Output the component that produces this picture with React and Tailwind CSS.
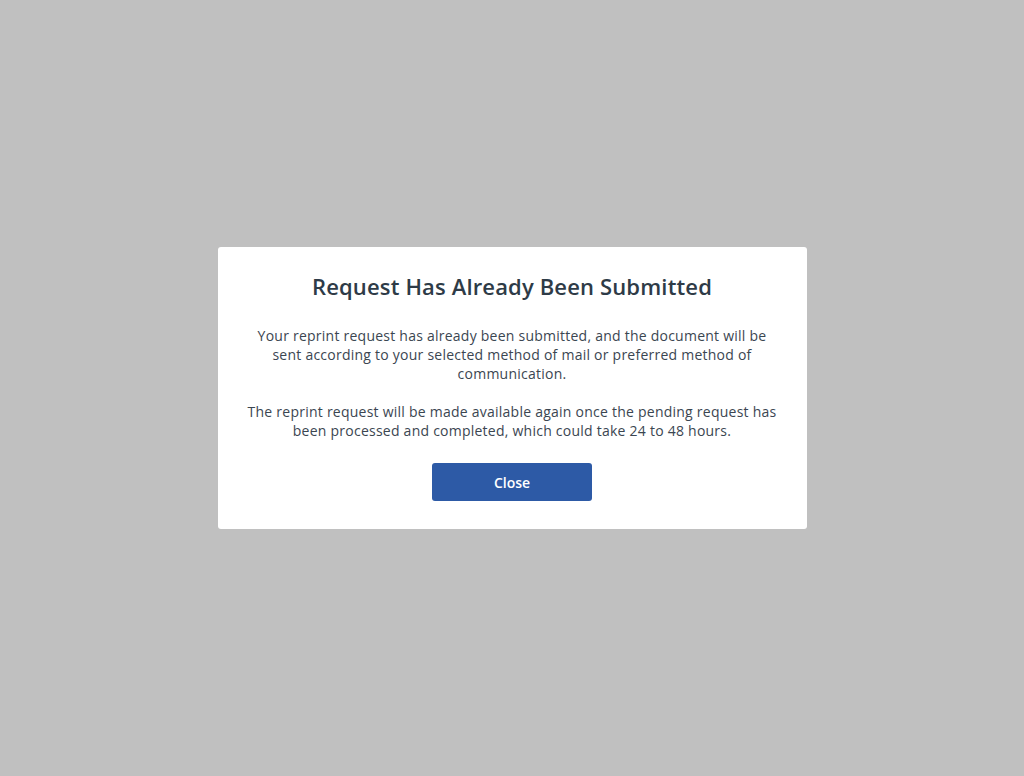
export default function App() {
  return (
    <div
      className="w-[1024px] h-[776px] bg-[#c0c0c0] flex items-start justify-center"
      style={{ fontFamily: '"Open Sans", "Noto Sans", sans-serif' }}
    >
      <div className="mt-[247px] w-[589px] bg-white rounded-[3px] pt-[24px] pb-[28px] px-[28px] flex flex-col items-center text-center">
        <h1 className="text-[22px] leading-[30px] font-semibold tracking-[0.15px] text-[#2e3b47]">
          Request Has Already Been Submitted
        </h1>
        <div className="mt-[25px] text-[14px] leading-[19px] tracking-[0.24px] text-[#3b4651] flex flex-col gap-[19px]">
          <p>
            Your reprint request has already been submitted, and the document will be sent according to your selected method of mail or preferred method of communication.
          </p>
          <p>
            The reprint request will be made available again once the pending request has been processed and completed, which could take 24 to 48 hours.
          </p>
        </div>
        <button className="mt-[23px] w-[160px] h-[38px] rounded-[3px] bg-[#2d5aa6] text-white text-[14px] font-semibold">
          Close
        </button>
      </div>
    </div>
  );
}
